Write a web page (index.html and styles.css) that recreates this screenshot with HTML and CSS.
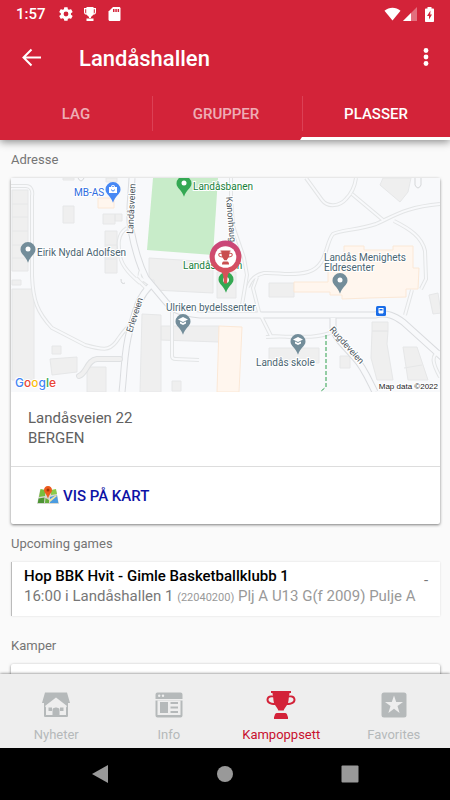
FILE: index.html
```html
<!DOCTYPE html>
<html lang="no">
<head>
    <meta charset="UTF-8">
    <meta name="viewport" content="width=device-width, initial-scale=1.0">
    <title>Landåshallen</title>
    <link rel="stylesheet" href="styles.css">
</head>
<body>
<!-- Shared shapes -->
<svg class="defs" aria-hidden="true">
    <symbol id="trophy" viewBox="0 0 30 28">
        <path d="M5 0h20v2h-1.500l-.3 2.700c3-.9 6.300.3 6.300 4 0 3.700-3.800 5.300-8.500 5.300-1.300 2.300-3 3.700-3.300 5.500h-5.400c-.3-1.800-2-3.200-3.300-5.500-4.700 0-8.500-1.600-8.500-5.300 0-3.700 3.300-4.900 6.300-4L6.500 2H5zM7.200 6.500C4.700 5.800 2.500 6.700 2.500 8.700c0 2 2.200 3.200 5.500 3.400-.5-1.800-.7-3.700-.8-5.600zM22.800 6.500c-.1 1.900-.3 3.800-.8 5.600 3.300-.2 5.500-1.400 5.500-3.400 0-2-2.200-2.900-4.700-2.200z"/>
        <path d="M11 22h8c1.800 0 2.500 2 2.500 3.500H22V28H8v-2.500h.5C8.500 24 9.200 22 11 22z"/>
    </symbol>
    <symbol id="pin" viewBox="0 0 16 21">
        <path d="M8 0a7.500 7.500 0 0 1 7.500 7.500c0 4.700-5.500 6.500-7.500 13.200C6 14 .5 12.200.5 7.500A7.500 7.500 0 0 1 8 0z"/>
    </symbol>
</svg>

<!-- Header -->
<header class="header">
    <div class="status-bar">
        <span class="clock">1:57</span>
        <svg class="status-icon" viewBox="0 0 24 24"><path d="M19.400 13a7.500 7.500 0 0 0 0-2l2.200-1.700c.2-.2.300-.5.200-.7l-2.100-3.600c-.1-.2-.4-.3-.7-.2l-2.500 1a7.600 7.600 0 0 0-1.700-1l-.4-2.700c0-.3-.2-.4-.5-.4H9.800c-.3 0-.5.100-.5.400l-.4 2.700c-.6.2-1.200.6-1.700 1l-2.500-1c-.3-.1-.6 0-.7.2L2 8.600c-.2.2-.1.500.1.700L4.300 11a7.500 7.500 0 0 0 0 2l-2.200 1.700c-.2.2-.3.500-.1.700L4 19c.1.200.4.300.7.200l2.500-1c.5.400 1.100.8 1.700 1l.4 2.700c0 .3.200.4.500.4h4.100c.3 0 .5-.1.500-.4l.4-2.700c.6-.2 1.200-.6 1.700-1l2.500 1c.3.100.6 0 .7-.2l2.100-3.600c.1-.2 0-.5-.2-.7zM12 15.600a3.600 3.600 0 1 1 0-7.200 3.600 3.600 0 0 1 0 7.200z"/></svg>
        <svg class="status-icon" viewBox="0 0 16 16"><path d="M4.500 1h7v1H14v4c0 1.800-1 2.700-2.900 2.800-.6 1.100-1.200 1.700-2.100 2V12H7v-1.200c-.9-.3-1.500-.9-2.100-2C3 8.700 2 7.800 2 6V2h2.500zM3.200 3.200V6c0 .8.300 1.200 1 1.400V3.200zM11.800 3.200v4.200c.7-.2 1-.6 1-1.400V3.200zM4.500 12.500h7V15h-7z"/></svg>
        <svg class="status-icon" viewBox="0 0 16 16"><path d="M7 1h6c1 0 1.500.6 1.500 1.500v11c0 .9-.5 1.500-1.500 1.500H4c-1 0-1.500-.6-1.500-1.500V5.500z"/><path class="sd-slots" d="M7 3h1.500v3H7zM9.300 3h1.500v3H9.300zM11.600 3h1.500v3h-1.500z"/></svg>
        <span class="spacer"></span>
        <svg class="wifi" viewBox="0 0 18 14"><path d="M.5 3.500C5.500-.8 12.500-.8 17.500 3.500L9 14z"/></svg>
        <svg class="signal" viewBox="0 0 14 14"><path d="M14 0v14H0z" opacity=".35"/><path d="M8 6v8H0z"/></svg>
        <svg class="battery" viewBox="0 0 9 15"><path d="M2.500 0h4v1.500H8c.6 0 1 .4 1 1V14c0 .6-.4 1-1 1H1c-.6 0-1-.4-1-1V2.500c0-.6.4-1 1-1h1.500z"/><path class="bolt" d="M5.500 3.500L2 9h2v3.500L7 7.500H5.200z"/></svg>
    </div>
    <div class="app-bar">
        <button class="icon-button back" aria-label="Tilbake">
            <svg viewBox="0 0 20 20"><path d="M10.500 1.500L2.500 9.500l8 8M2.500 9.500H20"/></svg>
        </button>
        <h1>Landåshallen</h1>
        <button class="icon-button more" aria-label="Meny">
            <svg viewBox="0 0 20 20"><circle cx="10" cy="2.500" r="2.400"/><circle cx="10" cy="9" r="2.400"/><circle cx="10" cy="15.500" r="2.400"/></svg>
        </button>
    </div>
    <nav class="tabs">
        <a href="#">LAG</a>
        <a href="#">GRUPPER</a>
        <a href="#" class="active">PLASSER</a>
    </nav>
</header>

<!-- Content -->
<main class="content">
    <h2>Adresse</h2>
    <section class="card">
        <svg class="map" viewBox="11 178 429 214" role="img" aria-label="Kart">
            <rect class="ground" x="11" y="178" width="429" height="214"/>
            <path class="pitch" d="M153 178h65l-5 77-66-5z"/>
            <!-- Buildings -->
            <g class="building">
                <path d="M12 190h16v81H12zM12 204h16M12 217h16M12 231h16M12 245h16M12 258h16"/>
                <path d="M63 178h11v2H63zM63 206h11v17H63zM106 178h11v4h-11zM103 214h12v10h-12zM115 214h7v7h-7zM105 231h12v42h-12zM105 245h12M105 259h12"/>
                <path d="M12 280h9v5h-9zM12 289h22v91H12zM52 346h9v8h-9zM50 359l27-2v15l-25 3zM87 367h19v25H87z"/>
                <path d="M149 258l64 4v31l-59-3v-10h-5zM217 272h19v26h-19zM142 314l19 1v77h-21zM161 326h58v16l-58-2zM172 381h9v10h-9z"/>
                <path d="M269 283h25v14h-25zM269 348h50v15h-50zM340 356h10v12h-10zM372 322h16v9h-16zM372 331h16l-1 13 6 36h-16l-6-22zM403 347h14l11 33h-20zM404 368l18-3M429 295l9-2 3 20-8 1z"/>
                <path d="M383 178h28l-3 14-8 10-20-17z"/>
            </g>
            <g class="public">
                <path d="M98 198h16v10H98zM219 326l23 1-3 65h-22z"/>
                <path d="M344 246h20v4h29v-4h20v22h6l-1 21h-12v8l-37 1-27 1v-4h-12v-3h-36v-10h34v-12h16z"/>
            </g>
            <!-- Roads: grey stroke with a light stroke on top -->
            <g class="road-edge">
                <path id="r1" d="M132 178c-1 20-4 36-1 52s8 34 15 48l20 24c4 5 9 11 34 13h175c12-3 20 1 28 7l40 36"/>
                <path id="r2" d="M150 286c-12 12-14 24-20 44s-5 35-8 62"/>
                <path id="r3" d="M333 318v10c2 10 10 16 22 30 8 8 13 20 20 34"/>
            </g>
            <g class="path-edge">
                <path id="p1" d="M11 186h15c5 0 7 5 6 10v80c1 24 5 36 20 52l33 17c18 5 24 6 31-3 6-8 8-13 16-18"/>
                <path id="p2" d="M306 178l16 22c6 8 18 6 24-1 6-6 9-14 10-21M352 194l31 26M248 287c2-6 6-12 16-14 14-1 26 4 44-1 20-6 17-29 25-38 8-4 25-4 43-10 18-8 30-17 64-20M394 221c16 8 28 16 31 30l1 28-5 10M412 290l-7 25"/>
                <path id="p3" d="M231 178v20l2 28 11 32 3 17-6 36M257 277l-4 11 6 24 12 24 19 1M172 312v44q0 3 4 3l23 1M266 337c22-2 45 3 64-4"/>
                <path id="p4" d="M127 228c-10 6-9 17-7 28s12 20 20 27M440 352c-10 3-7 12 0 25M148 283l-10-7M146 288l-10-10M144 270c-5 0-6 7-1 11"/>
            </g>
            <g class="path-fill">
                <use href="#p1"/><use href="#p2"/><use href="#p3"/><use href="#p4"/>
            </g>
            <g class="road-fill">
                <use href="#r1"/><use href="#r2"/><use href="#r3"/>
            </g>
            <path class="lane-edge" d="M79 376c8-3 8-16 18-17h23"/>
            <path class="lane" d="M79 376c8-3 8-16 18-17h23"/>
            <path class="loop" d="M415 178v7q3 6 6 0v-7M78 178q3 6 6 0M121 279q0 6 4 4"/>
            <path class="trail" d="M326 335v52l-6 5"/>
            <!-- Street names -->
            <g class="street">
                <text transform="translate(133 234) rotate(-87)">Landåsveien</text>
                <text transform="translate(226 197) rotate(85)">Kanonhaug</text>
                <text transform="translate(132 333) rotate(-72)">Erleveien</text>
                <text transform="translate(329 330) rotate(48)">Rugdeveien</text>
            </g>
            <!-- Places -->
            <g class="place">
                <text x="37" y="256">Eirik Nydal Adolfsen</text>
                <text x="166" y="311">Ulriken bydelssenter</text>
                <text x="256" y="366">Landås skole</text>
                <text x="324" y="261">Landås Menighets</text>
                <text x="324" y="271">Eldresenter</text>
                <text class="shop" x="74" y="196">MB-AS</text>
                <text class="sport" x="193" y="190">Landåsbanen</text>
                <text class="sport" x="183" y="269">Landåshallen</text>
            </g>
            <g class="pin-grey">
                <use href="#pin" x="20" y="242" width="16" height="21"/>
                <use href="#pin" x="332" y="273" width="16" height="21"/>
                <use href="#pin" x="175" y="314" width="16" height="21"/>
                <use href="#pin" x="290" y="334" width="16" height="21"/>
            </g>
            <g class="pin-green">
                <use href="#pin" x="176" y="176" width="16" height="21"/>
                <use href="#pin" x="218" y="272" width="16" height="21"/>
            </g>
            <use class="pin-blue" href="#pin" x="105" y="182" width="16" height="21"/>
            <g class="pin-dot">
                <circle cx="28" cy="249" r="2.500"/><circle cx="340" cy="280" r="2.500"/><circle cx="184" cy="183" r="2.500"/>
                <circle cx="226" cy="280" r="3"/>
                <path d="M183 317l5 2.500-5 2.500-5-2.500zM180 321.500l3 1.500 3-1.500v2l-3 1.500-3-1.500zM298 337l5 2.500-5 2.500-5-2.500zM295 341.500l3 1.500 3-1.500v2l-3 1.500-3-1.500z"/>
                <path d="M109 187h2a2 2 0 0 1 4 0h2v6h-8zM112 187h2a1 1 0 0 0-2 0z"/>
            </g>
            <path class="bag-smile" d="M111.500 189.500a1.500 1.500 0 0 0 3 0"/>
            <rect class="bus" x="376" y="306" width="10" height="10" rx="1.500"/>
            <path class="bus-sign" d="M378.500 308h5v5h-1v1h-1v-1h-1v1h-1v-1h-1zM379.500 309v1.500h3V309z"/>
            <!-- Marker of the hall -->
            <defs>
                <linearGradient id="marker" x1="0" y1="0" x2="0" y2="1">
                    <stop offset="0" stop-color="#c9467c"/>
                    <stop offset="1" stop-color="#dc5450"/>
                </linearGradient>
            </defs>
            <path fill="url(#marker)" d="M225.500 240.500a16.300 16.300 0 0 1 4 32c-2 1-2 6-2.500 11h-3c-.5-5-.5-10-2.500-11a16.300 16.300 0 0 1 4-32z"/>
            <circle class="marker-disc" cx="225.500" cy="257" r="10.800"/>
            <use class="marker-cup" href="#trophy" x="218" y="250" width="15" height="15"/>
            <text class="google" x="15" y="387"><tspan class="g-blue">G</tspan><tspan class="g-red">o</tspan><tspan class="g-yellow">o</tspan><tspan class="g-blue">g</tspan><tspan class="g-green">l</tspan><tspan class="g-red">e</tspan></text>
            <text class="copyright" x="438" y="389">Map data ©2022</text>
        </svg>
        <address>
            Landåsveien 22<br>
            BERGEN
        </address>
        <a href="#" class="map-link">
            <svg viewBox="0 0 22 20" aria-hidden="true">
                <path fill="#d5d8d2" d="M3 4h16l3 14H0z"/>
                <path fill="#77bd3d" d="M3.500 3l5 1-.5 6-6 1z"/>
                <path fill="#4d9434" d="M1.500 12.500l6-1-.5 5.500H.8z"/>
                <path fill="#8bcb4b" d="M14 4l5-1 1 5-6 1z"/>
                <path fill="#4b9be0" d="M13 11l7-2 1.300 8H13z"/>
                <path fill="#65ad3b" d="M8.500 12l3.500 2v3H8z"/>
                <path fill="#f1e3a0" d="M12 14l7-5 1 1-7 6z"/>
                <path fill="#ec5b1d" d="M11 0c2.500 0 4 1.700 4 4 0 3-3 4-4 9-1-5-4-6-4-9 0-2.300 1.500-4 4-4z"/>
                <circle cx="11" cy="4" r="1.500" fill="#a53306"/>
            </svg>
            VIS PÅ KART
        </a>
    </section>

    <h2>Upcoming games</h2>
    <section class="game">
        <div class="game-info">
            <h3>Hop BBK Hvit - Gimle Basketballklubb 1</h3>
            <p>16:00 i Landåshallen 1 <small>(22040200)</small> <span>Plj A U13 G(f 2009) Pulje A</span></p>
        </div>
        <span class="score">-</span>
    </section>

    <h2>Kamper</h2>
    <section class="card games"></section>
</main>

<!-- Bottom navigation -->
<nav class="bottom-nav">
    <a href="#">
        <svg viewBox="0 0 30 28"><path d="M4 1.500h22L29 12h-2v12.500c0 1-.5 1.500-1.500 1.500h-21c-1 0-1.500-.5-1.500-1.500V12H1z"/><path class="cut" d="M15 6.500L26 15l-1 1.500V24h-6.500v-5.500q0-1.500-1.500-1.500h-4q-1.500 0-1.500 1.500V24H5v-7.500L4 15z"/><path d="M7.500 16.500h3.500v3.500H7.500zM19 16.500h3.500v3.500H19zM12.500 18.500q0-2 2-2h1q2 0 2 2V25h-5z"/></svg>
        Nyheter
    </a>
    <a href="#">
        <svg viewBox="0 0 30 28"><path d="M3.500 1.500h23q2 0 2 2V8h-27V3.500q0-2 2-2zM1.500 9.500h27v15q0 2-2 2h-23q-2 0-2-2z"/><path class="cut" d="M3.500 9.500h23V24h-23z"/><circle class="cut" cx="5.200" cy="4.800" r="1.200"/><circle class="cut" cx="9" cy="4.800" r="1.200"/><path d="M6 11h8v11H6zM16.500 11H24v2h-7.500zM16.500 15.500H24v2h-7.500zM16.500 20H24v2h-7.500z"/></svg>
        Info
    </a>
    <a href="#" class="active">
        <svg viewBox="0 0 30 28"><use href="#trophy" width="30" height="28"/></svg>
        Kampoppsett
    </a>
    <a href="#">
        <svg viewBox="0 0 30 28"><rect x="2.500" y="1.500" width="25" height="25" rx="2.500"/><path class="cut" d="M15 4.500l2.200 6.600H24l-5.500 4 2.100 6.900-5.600-4.200L9.400 22l2.100-6.900-5.500-4h6.800z"/></svg>
        Favorites
    </a>
</nav>

<!-- System buttons -->
<footer class="system-bar">
    <button aria-label="Back"><svg viewBox="0 0 18 18"><path d="M17 0v18L1 9z"/></svg></button>
    <button aria-label="Home"><svg viewBox="0 0 18 18"><circle cx="9" cy="9" r="8"/></svg></button>
    <button aria-label="Overview"><svg viewBox="0 0 18 18"><rect x="0.500" y="0.500" width="17" height="17" rx="1"/></svg></button>
</footer>
</body>
</html>
```
FILE: styles.css
```css
* {
    box-sizing: border-box;
}

body {
    margin: 0;
    height: 100vh;
    display: flex;
    flex-direction: column;
    font-family: Roboto, "Liberation Sans", sans-serif;
    background: #fafafa;
}

h1, h2, h3, p {
    margin: 0;
}

a {
    text-decoration: none;
}

button {
    padding: 0;
    border: 0;
    background: none;
}

svg {
    display: block;
}

.defs {
    position: absolute;
    width: 0;
    height: 0;
}

/* Header */
.header {
    position: relative;
    z-index: 1;
    background: #d32339;
    color: #fff;
    box-shadow: 0 2px 8px rgba(0, 0, 0, 0.45);
}

.status-bar {
    display: flex;
    align-items: center;
    height: 28px;
    padding: 0 16px;
    fill: #fff;
}

.clock {
    margin-right: 12px;
    font-size: 15px;
    font-weight: 500;
}

.status-icon {
    width: 16px;
    height: 16px;
    margin-right: 8px;
}

.sd-slots, .bolt {
    fill: #d32339;
}

.spacer {
    flex: 1;
}

.wifi {
    width: 17px;
    height: 14px;
}

.signal {
    width: 14px;
    height: 14px;
    margin: 0 8px 0 2px;
}

.battery {
    width: 9px;
    height: 15px;
}

.app-bar {
    display: flex;
    align-items: center;
    height: 60px;
    padding: 0 14px 0 21px;
}

.app-bar h1 {
    flex: 1;
    margin-left: 38px;
    font-size: 22px;
    font-weight: 500;
}

.icon-button svg {
    width: 20px;
    height: 20px;
}

.back path {
    fill: none;
    stroke: #fff;
    stroke-width: 2;
}

.more {
    fill: #fff;
}

.tabs {
    display: flex;
    height: 52px;
}

.tabs a {
    flex: 1;
    display: flex;
    align-items: center;
    justify-content: center;
    border-left: 2px solid transparent;
    border-bottom: 3px solid transparent;
    padding-top: 3px;
    font-size: 15px;
    font-weight: 500;
    color: rgba(255, 255, 255, 0.65);
}

.tabs a + a {
    background: linear-gradient(#dc4055, #dc4055) no-repeat left 8px / 1px 35px;
}

.tabs a.active {
    color: #fff;
    border-bottom-color: #fff;
}

/* Content */
.content {
    flex: 1;
    min-height: 0;
    overflow: hidden;
    padding: 12px 10px 0 11px;
}

.content h2 {
    margin-bottom: 10px;
    font-size: 13px;
    line-height: 16px;
    font-weight: 400;
    color: #757575;
}

.card {
    margin-bottom: 12px;
    border-radius: 2px;
    background: #fff;
    box-shadow: 0 1px 3px rgba(0, 0, 0, 0.5);
}

.map {
    width: 100%;
    height: auto;
}

.card address {
    padding: 16px 17px 18px;
    border-bottom: 1px solid #ddd;
    font-size: 15px;
    line-height: 20px;
    font-style: normal;
    color: #616161;
}

.map-link {
    display: flex;
    align-items: center;
    gap: 4px;
    height: 57px;
    padding: 0 26px;
    font-size: 15px;
    font-weight: 500;
    color: #0d12a5;
}

.map-link svg {
    width: 22px;
    height: 20px;
}

.game {
    display: flex;
    justify-content: space-between;
    margin-bottom: 22px;
    padding: 4px 12px 8px;
    border-left: 1px solid #bbb;
    background: #fff;
    box-shadow: 0 0 2px rgba(0, 0, 0, 0.12);
}

.game-info {
    white-space: nowrap;
}

.game h3 {
    font-size: 15px;
    line-height: 20px;
    font-weight: 500;
    color: #000;
}

.game p {
    font-size: 15px;
    line-height: 20px;
    color: #777;
}

.game small {
    font-size: 11px;
    color: #999;
}

.game p span {
    color: #999;
}

.score {
    width: 4px;
    padding-top: 4px;
    font-size: 15px;
    line-height: 20px;
    color: #777;
}

.games {
    height: 60px;
}

/* Map */
.ground {
    fill: #f8f9fb;
}

.pitch {
    fill: #c8ecc9;
}

.building {
    fill: #efefef;
    stroke: #e6e7e8;
}

.public {
    fill: #fff6ee;
    stroke: #fbe8d6;
}

.road-edge, .road-fill, .path-edge, .path-fill, .lane, .lane-edge, .loop, .trail {
    fill: none;
}

.road-edge {
    stroke: #dadcdf;
    stroke-width: 7;
}

.road-fill {
    stroke: #f8f9fb;
    stroke-width: 5;
}

.path-edge {
    stroke: #e3e5e6;
    stroke-width: 4;
}

.path-fill {
    stroke: #f8f9fb;
    stroke-width: 2;
}

.lane-edge {
    stroke: #dfe1e3;
    stroke-width: 6;
    stroke-linecap: round;
}

.lane {
    stroke: #f0f0f0;
    stroke-width: 4;
    stroke-linecap: round;
}

.loop {
    stroke: #d5d7d9;
}

.trail {
    stroke: #2fa04c;
    stroke-dasharray: 4 2;
}

.map text {
    font-size: 10px;
    stroke: #fff;
    stroke-width: 2px;
    paint-order: stroke;
}

.map .street text {
    font-size: 9px;
    fill: #4d5761;
}

.place {
    fill: #4a6572;
}

.shop {
    fill: #2f6de0;
}

.sport {
    fill: #168039;
}

.pin-grey {
    fill: #738d9a;
}

.pin-green {
    fill: #34a853;
}

.pin-blue {
    fill: #4788f4;
}

.pin-dot, .marker-disc, .bus-sign {
    fill: #fff;
}

.pin-dot path {
    fill-rule: evenodd;
}

.bag-smile {
    fill: none;
    stroke: #4788f4;
}

.bus {
    fill: #1a6de8;
}

.bus-sign {
    fill-rule: evenodd;
}

.marker-cup {
    fill: #c94f4f;
}

.map .google {
    font-family: Inter, Roboto, sans-serif;
    font-size: 12px;
    font-weight: 500;
}

.g-blue {
    fill: #4285f4;
}

.g-red {
    fill: #ea4335;
}

.g-yellow {
    fill: #fbbc05;
}

.g-green {
    fill: #34a853;
}

.map .copyright {
    font-size: 8px;
    font-family: "Liberation Sans", sans-serif;
    text-anchor: end;
    fill: #222;
}

/* Bottom navigation */
.bottom-nav {
    position: relative;
    display: flex;
    height: 74px;
    background: #eee;
    box-shadow: 0 0 3px rgba(0, 0, 0, 0.6);
}

.bottom-nav a {
    flex: 1;
    display: flex;
    flex-direction: column;
    align-items: center;
    gap: 8px;
    padding-top: 17px;
    font-size: 13px;
    line-height: 16px;
    color: #b5b9ba;
    fill: #b5b9ba;
}

.bottom-nav svg {
    width: 30px;
    height: 28px;
}

.bottom-nav .cut {
    fill: #eee;
}

.bottom-nav a.active {
    color: #c8102e;
    fill: #d32339;
}

/* System buttons */
.system-bar {
    position: relative;
    display: flex;
    justify-content: center;
    gap: 107px;
    height: 52px;
    background: #000;
}

.system-bar svg {
    width: 18px;
    height: 18px;
    fill: #999;
}
```
